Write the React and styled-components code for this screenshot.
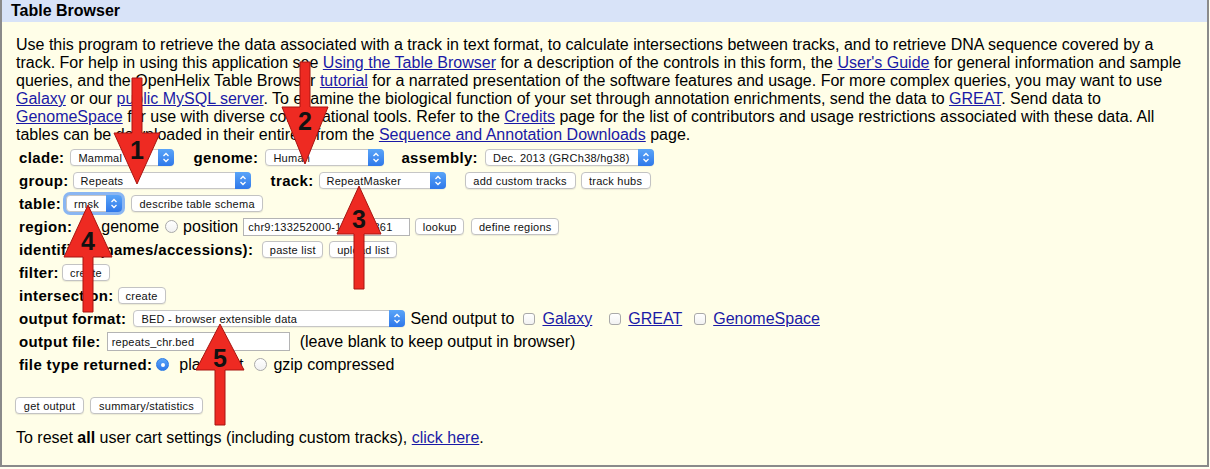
import React from 'react';
import styled, { createGlobalStyle, css } from 'styled-components';

const GlobalStyle = createGlobalStyle`
    html, body {
        margin: 0;
        padding: 0;
        background: #fffff0;
    }
    * {
        box-sizing: border-box;
    }
`;

const Page = styled.div`
    position: relative;
    width: 1209px;
    height: 467px;
    border: 2px solid #8a8a8a;
    border-top: none;
    background: #fffee8;
    font-family: "Liberation Sans", Arial, sans-serif;
    color: #000;
`;

const Header = styled.div`
    height: 22px;
    line-height: 22px;
    padding-left: 9px;
    background: #d8e3f8;
    font-size: 16px;
    font-weight: bold;
`;

const Body = styled.div`
    padding: 14px 14px 0 14px;
`;

const Intro = styled.p`
    margin: 0;
    font-size: 16px;
    line-height: 18px;
    white-space: nowrap;
`;

const Link = styled.a`
    color: #1a1aa6;
    text-decoration: underline;
    cursor: pointer;
    margin-left: ${p => p.$ml || 0}px;
`;

const Form = styled.div`
    margin-top: 2px;
    padding-left: 3px;
`;

const Row = styled.div`
    display: flex;
    align-items: center;
    height: 23px;
    white-space: nowrap;
`;

const Label = styled.span`
    font-size: 15px;
    font-weight: bold;
    letter-spacing: 0.35px;
    margin-left: ${p => p.$ml || 0}px;
`;

const Text = styled.span`
    font-size: 16px;
    margin-left: ${p => p.$ml || 0}px;
`;

const SelectBox = styled.span`
    position: relative;
    display: inline-flex;
    align-items: center;
    width: ${p => p.$w}px;
    height: 17px;
    margin-left: ${p => p.$ml || 0}px;
    padding-left: 7px;
    background: #fff;
    border: 1px solid #c6c6c6;
    border-radius: 4px;
    font-size: 11px;
    letter-spacing: 0.25px;
    color: #111;
    box-shadow: 0 1px 1px rgba(0, 0, 0, 0.06);
    ${p => p.$focused && css`
        box-shadow: 0 0 0 3px #8ab6f2;
    `}
`;

const Stepper = styled.span`
    position: absolute;
    top: -1px;
    right: -1px;
    bottom: -1px;
    width: 16px;
    display: flex;
    align-items: center;
    justify-content: center;
    border-radius: 0 4px 4px 0;
    background: linear-gradient(#5aa5f8, #2f78ea);
`;

const Button = styled.span`
    display: inline-flex;
    align-items: center;
    justify-content: center;
    width: ${p => p.$w}px;
    height: 17px;
    margin-left: ${p => p.$ml || 0}px;
    background: #fff;
    border: 1px solid #c3c3c3;
    border-radius: 4px;
    font-size: 11px;
    letter-spacing: 0.25px;
    color: #111;
    box-shadow: 0 1px 1px rgba(0, 0, 0, 0.08);
`;

const Input = styled.span`
    display: inline-flex;
    align-items: center;
    width: ${p => p.$w}px;
    height: ${p => p.$h || 18}px;
    margin-left: ${p => p.$ml || 0}px;
    padding-left: 4px;
    background: #fff;
    border: 1px solid #b4b4b4;
    font-size: 11px;
    letter-spacing: 0.25px;
    color: #111;
`;

const Radio = styled.span`
    position: relative;
    display: inline-block;
    width: 13px;
    height: 13px;
    margin-left: ${p => p.$ml || 0}px;
    border-radius: 50%;
    border: 1px solid #a9a9a9;
    background: linear-gradient(#fff, #f1f1f1);
    ${p => p.$checked && css`
        border-color: #2c7be5;
        background: linear-gradient(#5aa5f8, #2f78ea);
        &::after {
            content: '';
            position: absolute;
            left: 3.5px;
            top: 3.5px;
            width: 4px;
            height: 4px;
            border-radius: 50%;
            background: #fff;
        }
    `}
`;

const Check = styled.span`
    display: inline-block;
    width: 12px;
    height: 12px;
    margin-left: ${p => p.$ml || 0}px;
    border: 1px solid #a9a9a9;
    border-radius: 3px;
    background: linear-gradient(#fff, #f2f2f2);
`;

const ButtonRow = styled.div`
    display: flex;
    margin-top: 21px;
    margin-left: -1px;
`;

const Reset = styled.p`
    margin: 15px 0 0 0;
    font-size: 16px;
    line-height: 18px;
`;

const Overlay = styled.svg`
    position: absolute;
    top: 0;
    left: -2px;
    width: 1210px;
    height: 469px;
    pointer-events: none;
`;

const Chevrons = () => (
    <svg width="8" height="11" viewBox="0 0 8 11">
        <path d="M1.5 4 L4 1.5 L6.5 4 M1.5 7 L4 9.5 L6.5 7" fill="none" stroke="#fff" strokeWidth="1.3" />
    </svg>
);

const Select = ({value, w, ml, focused}) => (
    <SelectBox $w={w} $ml={ml} $focused={focused}>
        {value}
        <Stepper><Chevrons /></Stepper>
    </SelectBox>
);

const arrows = [
    {n: '1', tx: 137, ty: 184, base: 133, half: 23, tail: 78, num: 159},
    {n: '2', tx: 305, ty: 164, base: 107, half: 23, tail: 62, num: 130},
    {n: '3', tx: 359, ty: 186, base: 234, half: 22, tail: 289, num: 228},
    {n: '4', tx: 88, ty: 205, base: 257, half: 24, tail: 312, num: 250},
    {n: '5', tx: 220, ty: 324, base: 370, half: 24, tail: 425, num: 367},
];

const Arrow = ({tx, ty, base, half, tail, n, num}) => {
    const s = 5;
    const pts = [
        [tx, ty], [tx + half, base], [tx + s, base], [tx + s, tail],
        [tx - s, tail], [tx - s, base], [tx - half, base],
    ].map(p => p.join(',')).join(' ');
    return (
        <g>
            <polygon points={pts} fill="#ee2a22" stroke="#a81510" strokeWidth="1" strokeLinejoin="round" />
            <text x={tx} y={num} textAnchor="middle" fontFamily="Liberation Sans, Arial, sans-serif" fontWeight="bold" fontSize="25" fill="#111">{n}</text>
        </g>
    );
};

const App = () => {
    return (
        <Page>
            <GlobalStyle />
            <Header>Table Browser</Header>
            <Body>
                <Intro>
                    Use this program to retrieve the data associated with a track in text format, to calculate intersections between tracks, and to retrieve DNA sequence covered by a<br />
                    track. For help in using this application see <Link>Using the Table Browser</Link> for a description of the controls in this form, the <Link>User's Guide</Link> for general information and sample<br />
                    queries, and the OpenHelix Table Browser <Link>tutorial</Link> for a narrated presentation of the software features and usage. For more complex queries, you may want to use<br />
                    <Link>Galaxy</Link> or our <Link>public MySQL server</Link>. To examine the biological function of your set through annotation enrichments, send the data to <Link>GREAT</Link>. Send data to<br />
                    <Link>GenomeSpace</Link> for use with diverse computational tools. Refer to the <Link>Credits</Link> page for the list of contributors and usage restrictions associated with these data. All<br />
                    tables can be downloaded in their entirety from the <Link>Sequence and Annotation Downloads</Link> page.
                </Intro>

                <Form>
                    <Row>
                        <Label>clade:</Label>
                        <Select value="Mammal" w={104} ml={6} />
                        <Label $ml={19}>genome:</Label>
                        <Select value="Human" w={119} ml={7} />
                        <Label $ml={17}>assembly:</Label>
                        <Select value="Dec. 2013 (GRCh38/hg38)" w={169} ml={7} />
                    </Row>
                    <Row>
                        <Label>group:</Label>
                        <Select value="Repeats" w={178} ml={4} />
                        <Label $ml={20}>track:</Label>
                        <Select value="RepeatMasker" w={127} ml={5} />
                        <Button $w={111} $ml={19}>add custom tracks</Button>
                        <Button $w={70} $ml={5}>track hubs</Button>
                    </Row>
                    <Row>
                        <Label>table:</Label>
                        <Select value="rmsk" w={56} ml={5} focused />
                        <Button $w={132} $ml={9}>describe table schema</Button>
                    </Row>
                    <Row>
                        <Label>region:</Label>
                        <Radio $ml={8} $checked />
                        <Text $ml={8}>genome</Text>
                        <Radio $ml={6} />
                        <Text $ml={5}>position</Text>
                        <Input $w={167} $h={18} $ml={5}>chr9:133252000-133280861</Input>
                        <Button $w={49} $ml={5}>lookup</Button>
                        <Button $w={88} $ml={7}>define regions</Button>
                    </Row>
                    <Row>
                        <Label>identifiers (names/accessions):</Label>
                        <Button $w={61} $ml={9}>paste list</Button>
                        <Button $w={68} $ml={6}>upload list</Button>
                    </Row>
                    <Row>
                        <Label>filter:</Label>
                        <Button $w={48} $ml={3}>create</Button>
                    </Row>
                    <Row>
                        <Label>intersection:</Label>
                        <Button $w={48} $ml={4}>create</Button>
                    </Row>
                    <Row>
                        <Label>output format:</Label>
                        <Select value="BED - browser extensible data" w={272} ml={7} />
                        <Text $ml={5}>Send output to</Text>
                        <Check $ml={9} />
                        <Link $ml={7}>Galaxy</Link>
                        <Check $ml={17} />
                        <Link $ml={7}>GREAT</Link>
                        <Check $ml={12} />
                        <Link $ml={7}>GenomeSpace</Link>
                    </Row>
                    <Row>
                        <Label>output file:</Label>
                        <Input $w={183} $h={19} $ml={6}>repeats_chr.bed</Input>
                        <Text $ml={10}>(leave blank to keep output in browser)</Text>
                    </Row>
                    <Row>
                        <Label>file type returned:</Label>
                        <Radio $ml={4} $checked />
                        <Text $ml={10}>plain text</Text>
                        <Radio $ml={11} />
                        <Text $ml={6}>gzip compressed</Text>
                    </Row>
                </Form>

                <ButtonRow>
                    <Button $w={69}>get output</Button>
                    <Button $w={113} $ml={6}>summary/statistics</Button>
                </ButtonRow>

                <Reset>
                    To reset <b>all</b> user cart settings (including custom tracks), <Link>click here</Link>.
                </Reset>
            </Body>

            <Overlay viewBox="0 0 1210 469">
                {arrows.map(a => <Arrow key={a.n} {...a} />)}
            </Overlay>
        </Page>
    );
};

export default App;
